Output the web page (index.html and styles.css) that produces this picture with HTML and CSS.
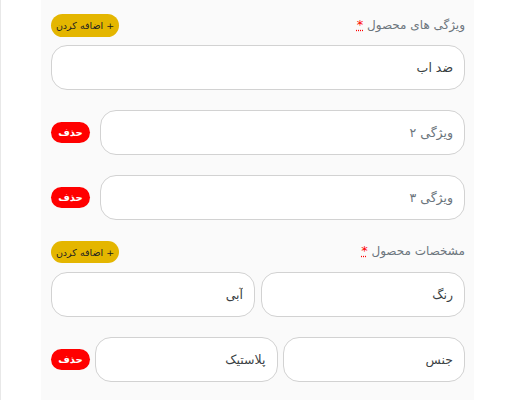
FILE: index.html
```html
<!DOCTYPE html>
<html lang="fa" dir="rtl">
<head>
<meta charset="utf-8">
<link rel="stylesheet" href="styles.css">
</head>
<body>
<div class="page">
  <div class="panel">
    <div class="head">
      <label class="label">ویژگی های محصول <abbr class="req" title="required">*</abbr></label>
      <button class="add">+ اضافه کردن</button>
    </div>
    <div class="row first">
      <input class="field" type="text" value="ضد اب">
    </div>
    <div class="row">
      <input class="field" type="text" placeholder="ویژگی ۲">
      <button class="del">حذف</button>
    </div>
    <div class="row">
      <input class="field" type="text" placeholder="ویژگی ۳">
      <button class="del">حذف</button>
    </div>
    <div class="head section">
      <label class="label">مشخصات محصول <abbr class="req" title="required">*</abbr></label>
      <button class="add">+ اضافه کردن</button>
    </div>
    <div class="row first pair">
      <input class="field" type="text" value="رنگ">
      <input class="field" type="text" value="آبی">
    </div>
    <div class="row pair tight">
      <input class="field" type="text" value="جنس">
      <input class="field" type="text" value="پلاستیک">
      <button class="del">حذف</button>
    </div>
  </div>
</div>
</body>
</html>
```
FILE: styles.css
```css
html, body {
  margin: 0;
  padding: 0;
  background: #ffffff;
}
body {
  font-family: "DejaVu Sans", "Noto Sans", sans-serif;
}
.page {
  display: flex;
  flex-direction: row-reverse;
  justify-content: flex-end;
  height: 400px;
  border-left: 1px solid #e8e8e8;
  box-sizing: border-box;
  direction: ltr;
}
.panel {
  direction: rtl;
  margin-left: 40px;
  width: 433px;
  background: #fafafa;
  box-sizing: border-box;
  padding: 14px 9px 0 10px;
  display: flex;
  flex-direction: column;
}
.head {
  display: flex;
  align-items: center;
  justify-content: space-between;
  height: 23px;
}
.head.section {
  margin-top: 21px;
  height: 22px;
}
.label {
  font-size: 12px;
  color: #6c757d;
  padding-bottom: 3px;
}
.req {
  color: #ff0000;
  text-decoration: underline dotted;
  text-decoration-color: #ff0000;
  font-size: 13px;
}
.add {
  height: 23px;
  width: 68px;
  border: none;
  border-radius: 12px;
  background: #e4b600;
  color: #222;
  font-family: "DejaVu Sans", sans-serif;
  font-size: 9.5px;
  padding: 0;
  white-space: nowrap;
}
.head.section .add {
  height: 22px;
}
.row {
  display: flex;
  align-items: center;
  gap: 10px;
  margin-top: 20px;
}
.row.first {
  margin-top: 8px;
}
.head.section + .row.first {
  margin-top: 9px;
}
.row.pair {
  gap: 6px;
}
.row.tight {
  gap: 5px;
  margin-top: 20px;
}
.field {
  flex: 1;
  min-width: 0;
  height: 45px;
  box-sizing: border-box;
  border: 1px solid #d2d2d2;
  border-radius: 16px;
  background: #ffffff;
  padding: 0 11px;
  font-family: "DejaVu Sans", sans-serif;
  font-size: 12.5px;
  color: #3a3f44;
  direction: rtl;
  outline: none;
}
.field::placeholder {
  color: #6c757d;
}
.del {
  flex: none;
  width: 39px;
  height: 21px;
  border: none;
  border-radius: 11px;
  background: #ff0000;
  color: #ffffff;
  font-family: "DejaVu Sans", sans-serif;
  font-weight: bold;
  font-size: 10px;
  padding: 0;
}
```
